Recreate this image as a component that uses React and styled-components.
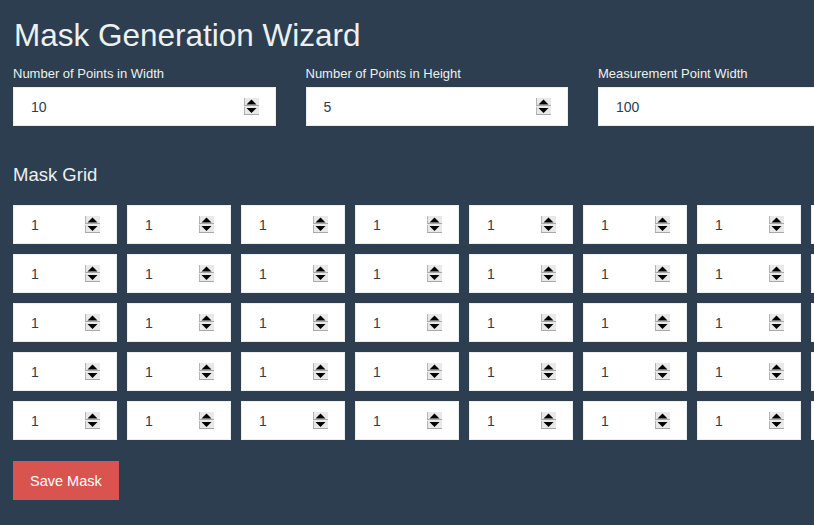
import React, { useState } from "react";
import styled, { createGlobalStyle } from "styled-components";

const GlobalStyle = createGlobalStyle`
  html, body {
    margin: 0;
    padding: 0;
    background: #2c3e50;
    overflow: hidden;
  }
  body {
    font-family: "Liberation Sans", Arial, sans-serif;
  }
  input[type="number"]::-webkit-inner-spin-button,
  input[type="number"]::-webkit-outer-spin-button {
    -webkit-appearance: none;
    margin: 0;
  }
`;

const SpinIcon = () => (
  <svg width="15" height="17" viewBox="0 0 15 17">
    <rect x="0" y="0" width="15" height="17" fill="#e9e9e9" />
    <path d="M0.5 0 V8 M0.5 9 V17" stroke="#b4b4b4" strokeWidth="1" />
    <path d="M0 7.5 H15 M0 16.5 H15" stroke="#a8a8a8" strokeWidth="1" />
    <path d="M7.5 1.5 L12.5 6.5 H2.5 Z" fill="#000" />
    <path d="M2.5 10 H12.5 L7.5 15 Z" fill="#000" />
  </svg>
);

const NumberField = ({ value, onChange, small }) => (
  <FieldBox $small={small}>
    <Input type="number" value={value} onChange={onChange} />
    <Spinner>
      <SpinIcon />
    </Spinner>
  </FieldBox>
);

const App = () => {
  const [width, setWidth] = useState(10);
  const [height, setHeight] = useState(5);
  const [pointWidth, setPointWidth] = useState(100);
  const [grid, setGrid] = useState(
    Array.from({ length: 5 }, () => Array.from({ length: 10 }, () => 1))
  );

  const updateCell = (r, c, v) => {
    const next = grid.map((row) => row.slice());
    next[r][c] = v;
    setGrid(next);
  };

  return (
    <Container>
      <GlobalStyle />
      <Title>Mask Generation Wizard</Title>
      <Fields>
        <Field>
          <Label>Number of Points in Width</Label>
          <NumberField value={width} onChange={(e) => setWidth(e.target.value)} />
        </Field>
        <Field>
          <Label>Number of Points in Height</Label>
          <NumberField value={height} onChange={(e) => setHeight(e.target.value)} />
        </Field>
        <Field>
          <Label>Measurement Point Width</Label>
          <NumberField value={pointWidth} onChange={(e) => setPointWidth(e.target.value)} />
        </Field>
      </Fields>
      <SubTitle>Mask Grid</SubTitle>
      <Grid>
        {grid.map((row, r) => (
          <Row key={r}>
            {row.map((v, c) => (
              <NumberField
                key={c}
                small
                value={v}
                onChange={(e) => updateCell(r, c, e.target.value)}
              />
            ))}
          </Row>
        ))}
      </Grid>
      <SaveButton>Save Mask</SaveButton>
    </Container>
  );
};

export default App;

const Container = styled.div`
  padding: 13px 13px 0;
  width: max-content;
  color: #ecf0f1;
`;
const Title = styled.h1`
  margin: 0 0 10px;
  font-size: 31.5px;
  font-weight: normal;
  line-height: 44px;
  padding-left: 1px;
`;
const Fields = styled.div`
  display: flex;
  gap: 30px;
`;
const Field = styled.div`
  display: flex;
  flex-direction: column;
  width: 262.5px;
`;
const Label = styled.label`
  font-size: 13px;
  line-height: 14px;
  margin-bottom: 6px;
  color: #ecf0f1;
`;
const FieldBox = styled.div`
  position: relative;
  width: ${(p) => (p.$small ? "104px" : "100%")};
  height: 39px;
`;
const Input = styled.input`
  box-sizing: border-box;
  height: 100%;
  width: 100%;
  border: 1px solid #eeeeee;
  background: #fff;
  padding: 0 36px 0 17px;
  font-family: "Liberation Sans", Arial, sans-serif;
  font-size: 14px;
  color: #2c3e50;
  outline: none;
  -moz-appearance: textfield;
`;
const Spinner = styled.div`
  position: absolute;
  right: 17px;
  top: 11px;
  width: 15px;
  height: 17px;
  display: flex;
  pointer-events: none;
`;
const SubTitle = styled.h2`
  margin: 39px 0 20px;
  font-size: 18.5px;
  font-weight: normal;
  line-height: 20px;
`;
const Grid = styled.div`
  display: flex;
  flex-direction: column;
  gap: 10px;
`;
const Row = styled.div`
  display: flex;
  gap: 10px;
`;
const SaveButton = styled.button`
  margin-top: 21px;
  height: 39px;
  padding: 0 17px;
  border: none;
  background: #d9534f;
  color: #fff;
  font-family: "Liberation Sans", Arial, sans-serif;
  font-size: 14.5px;
  cursor: pointer;
`;
